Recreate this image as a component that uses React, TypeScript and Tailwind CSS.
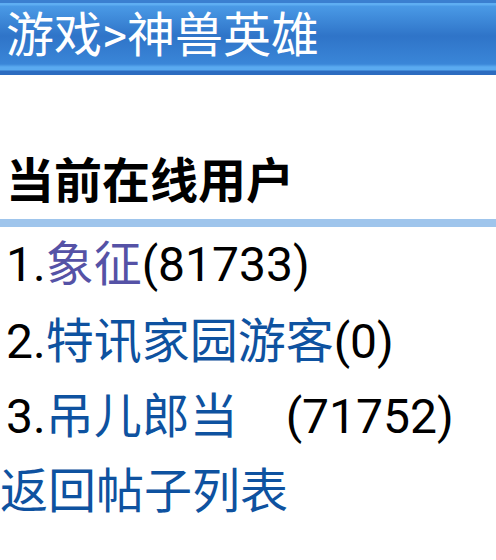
import React from "react";

export default function App() {
  const font = { fontFamily: 'Roboto, "Noto Sans CJK SC", sans-serif' };
  return (
    <div className="w-[496px] h-[560px] bg-white overflow-hidden" style={font}>
      <div className="h-[75px] bg-[linear-gradient(to_bottom,#3a7fd0_0px,#3a7fd0_3px,#5eaef2_3px,#5eaef2_5px,#4a9ae6_6px,#2f74c8_36px,#3a86d8_64px,#5aaaf0_67px,#5aaaf0_70px,#2c6cc0_71px,#2c6cc0_75px)] text-white text-[48px] leading-[72px] pl-[6px]">
        游戏&gt;神兽英雄
      </div>
      <div className="mt-[69px] h-[75px] text-[48px] leading-[75px] font-bold text-black pl-[6px]">
        当前在线用户
      </div>
      <div className="h-[8px] bg-[#9fc5ec]" />
      <div className="text-[48px] leading-[75px] text-black pl-[6px]">
        <div>
          1.<span className="text-[#5552a6]">象征</span>(81733)
        </div>
        <div className="pt-[2px]">
          2.<span className="text-[#0e52a0]">特讯家园游客</span>(0)
        </div>
        <div>
          3.<span className="text-[#0e52a0]">吊儿郎当</span>　(71752)
        </div>
      </div>
      <div className="text-[48px] leading-[75px] text-[#0e52a0]">返回帖子列表</div>
    </div>
  );
}
